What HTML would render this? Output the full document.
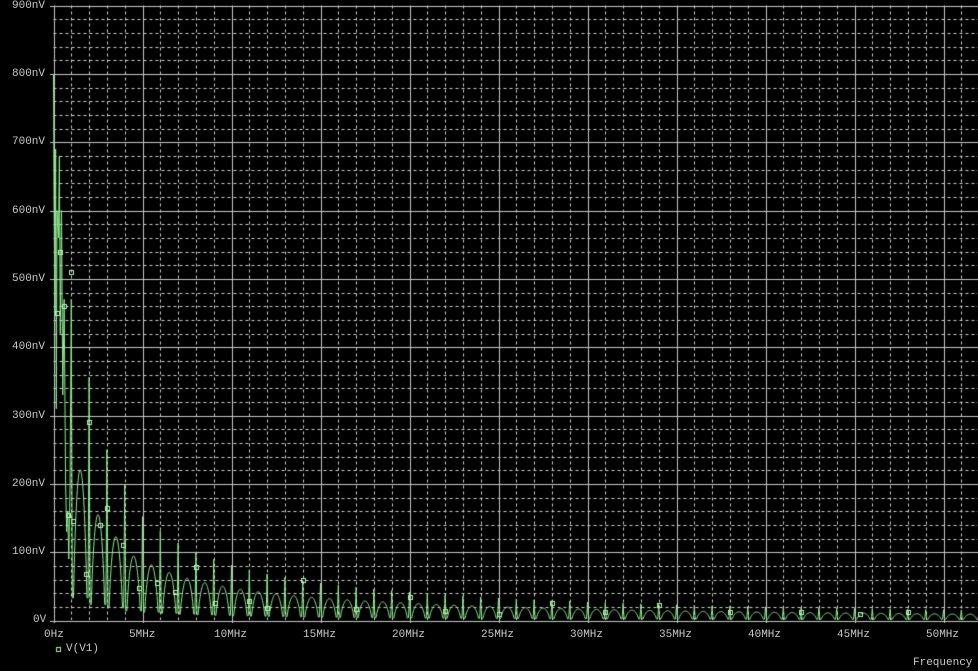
<!DOCTYPE html>
<html><head><style>
html,body{margin:0;padding:0;background:#000;width:978px;height:671px;overflow:hidden}
canvas{position:absolute;left:0;top:0}
.t{position:absolute;font-family:"Liberation Mono",monospace;font-size:11px;color:#c8c8c8;white-space:pre;line-height:12px}
</style></head><body>
<canvas id="c" width="978" height="671"></canvas>
<div class="t" style="left:12px;top:0px">900nV</div>
<div class="t" style="left:12px;top:68px">800nV</div>
<div class="t" style="left:12px;top:136px">700nV</div>
<div class="t" style="left:12px;top:205px">600nV</div>
<div class="t" style="left:12px;top:273px">500nV</div>
<div class="t" style="left:12px;top:341px">400nV</div>
<div class="t" style="left:12px;top:410px">300nV</div>
<div class="t" style="left:12px;top:478px">200nV</div>
<div class="t" style="left:12px;top:546px">100nV</div>
<div class="t" style="left:33px;top:614px">0V</div>
<div class="t" style="left:44px;top:629px">0Hz</div>
<div class="t" style="left:129px;top:629px">5MHz</div>
<div class="t" style="left:214px;top:629px">10MHz</div>
<div class="t" style="left:303px;top:629px">15MHz</div>
<div class="t" style="left:392px;top:629px">20MHz</div>
<div class="t" style="left:481px;top:629px">25MHz</div>
<div class="t" style="left:570px;top:629px">30MHz</div>
<div class="t" style="left:659px;top:629px">35MHz</div>
<div class="t" style="left:748px;top:629px">40MHz</div>
<div class="t" style="left:837px;top:629px">45MHz</div>
<div class="t" style="left:926px;top:629px">50MHz</div>
<div class="t" style="left:66px;top:643px">V(V1)</div>
<div class="t" style="left:913px;top:657px">Frequency</div>
<script>
var c=document.getElementById('c').getContext('2d');
var X0=53.5,Y0=620.5,PX=17.8,PY=0.6832;
function xf(f){return X0+f*PX}function yv(v){return Y0-v*PY}
c.lineWidth=1;
c.strokeStyle='#d0d0d0';c.setLineDash([3,3]);
for(var i=1;i<55;i++){if(i%5){var x=Math.round(xf(i))+.5;c.beginPath();c.moveTo(x,5.5);c.lineTo(x,620);c.stroke();}}
for(var j=1;j<45;j++){if(j%5){var y=Math.round(yv(j*20))+.5;c.beginPath();c.moveTo(53.5,y);c.lineTo(978,y);c.stroke();}}
c.setLineDash([]);c.strokeStyle='#c8c8c8';
for(var i=0;i<=10;i++){var x=Math.round(xf(i*5))+.5;c.beginPath();c.moveTo(x,5.5);c.lineTo(x,623);c.stroke();}
for(var j=0;j<=9;j++){var y=Math.round(yv(j*100))+.5;c.beginPath();c.moveTo(50,y);c.lineTo(978,y);c.stroke();}
var tab=[800,470,356,250,198,152];
function p(n){return n<6?tab[n]:720/Math.pow(n,0.95)*(n>20?Math.pow(20/n,0.12):1)}
c.strokeStyle='#90ee90';c.beginPath();
// first interval custom (freq, nV)
var first=[[0,800],[0.03,620],[0.08,450],[0.12,690],[0.16,310],[0.2,600],[0.28,560],[0.33,680],[0.38,420],[0.45,600],[0.52,330],[0.6,470],[0.68,200],[0.74,130],[0.8,160],[0.86,90],[0.93,200],[1.0,470]];
first.forEach(function(q,k){k?c.lineTo(xf(q[0]),yv(q[1])):c.moveTo(xf(q[0]),yv(q[1]))});
for(var f=1;f<=52.3;f+=0.02){
 var n=Math.floor(f),d=f-n;
 var pk=Math.max(p(n)*Math.max(0,1-d/0.06),p(n+1)*Math.max(0,1-(1-d)/0.06));
 var h=0.62*p(n+1);
 var hump=0;
 if(d>0.12&&d<0.88){hump=h*Math.pow(Math.sin(Math.PI*(d-0.12)/0.76),0.6);}
 var v=Math.max(pk,hump,h*0.15);
 c.lineTo(xf(f),yv(v));
}
c.stroke();
var mk=[[0.2,450],[0.35,540],[0.6,460],[0.8,155],[1.0,510],[1.1,145],[1.8,68],[2.0,290],[2.6,140],[3.0,165],[3.9,110],[4.8,47],[5.8,55],[6.8,42],[8.0,78],[9.1,25],[11,28],[12,18],[14,60],[17,17],[20,35],[22,14],[25,10],[28,25],[31,12],[34,22],[38,12],[42,12],[45.3,10],[48,12]];
c.strokeStyle='#b0f0b0';
mk.forEach(function(m){c.strokeRect(Math.round(xf(m[0]))-1.5,Math.round(yv(m[1]))-1.5,4,4)});
c.strokeRect(56.5,647.5,4,4);
</script>
</body></html>
